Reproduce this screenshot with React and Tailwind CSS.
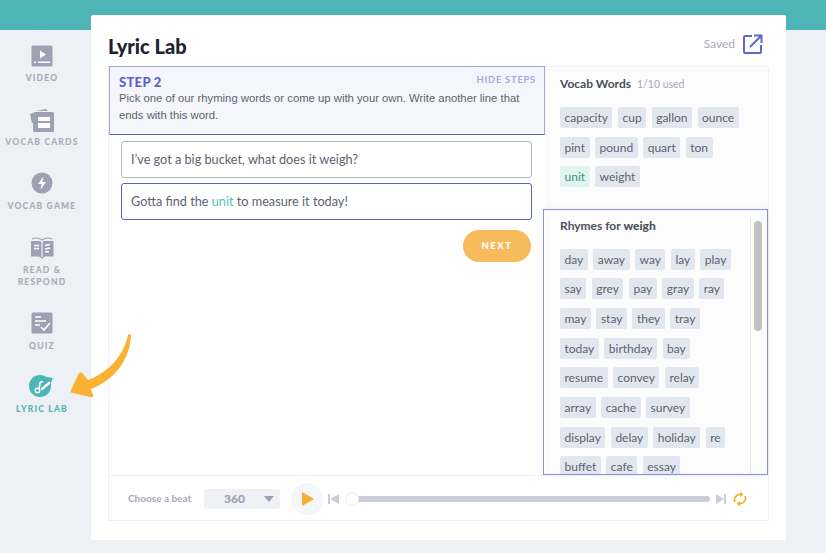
import React from 'react';

const vocabRows = [
  ['capacity', 'cup', 'gallon', 'ounce'],
  ['pint', 'pound', 'quart', 'ton'],
  ['unit', 'weight'],
];

const rhymeRows = [
  ['day', 'away', 'way', 'lay', 'play'],
  ['say', 'grey', 'pay', 'gray', 'ray'],
  ['may', 'stay', 'they', 'tray'],
  ['today', 'birthday', 'bay'],
  ['resume', 'convey', 'relay'],
  ['array', 'cache', 'survey'],
  ['display', 'delay', 'holiday', 're'],
  ['buffet', 'cafe', 'essay'],
];

const VideoIcon = () => (
  <svg width="22" height="22" viewBox="0 0 22 22">
    <rect width="21" height="21" x="0.5" y="0.5" rx="1.5" fill="#9ca1b3" />
    <path d="M9 5.5l6 4-6 4z" fill="#fff" />
    <rect x="3" y="16.5" width="2" height="1.5" fill="#fff" />
    <rect x="7" y="16.5" width="12" height="1.5" fill="#fff" />
  </svg>
);

const CardsIcon = () => (
  <svg width="26" height="24" viewBox="0 0 26 24">
    <path d="M1 5l3-1 1 10-2 0z" fill="#9ca1b3" />
    <path d="M7 2l10-2 2 2z" fill="#9ca1b3" />
    <rect x="4" y="3" width="21" height="20" rx="1.5" fill="#9ca1b3" />
    <rect x="9" y="8" width="12" height="4" fill="#fff" />
    <rect x="9" y="14" width="12" height="5" fill="#fff" />
  </svg>
);

const GameIcon = () => (
  <svg width="22" height="22" viewBox="0 0 22 22">
    <circle cx="11" cy="11" r="10.5" fill="#9ca1b3" />
    <path d="M12.5 4.5L7 12h3.5l-1 5.5L15 10h-3.5z" fill="#fff" />
  </svg>
);

const BookIcon = () => (
  <svg width="26" height="23" viewBox="0 0 26 23">
    <path d="M2 5h9l2 1.5L15 5h9.5v15.5H16l-3 2-3-2H2z" fill="#9ca1b3" />
    <path d="M3 3c3-1.5 7-1 10 1 3-2 7-2.5 10-1" fill="none" stroke="#9ca1b3" strokeWidth="1.2" />
    <path d="M5 9.5h5M5 12.5h5" stroke="#fff" strokeWidth="1.6" />
    <path d="M16 9.5l5-1M16 13l5-1M16 16l4-.5" stroke="#fff" strokeWidth="1.6" />
    <rect x="12.5" y="6" width="1" height="15" fill="#fff" />
  </svg>
);

const QuizIcon = () => (
  <svg width="22" height="22" viewBox="0 0 22 22">
    <rect width="21" height="21" x="0.5" y="0.5" rx="1.5" fill="#9ca1b3" />
    <path d="M4 5h6M4 9h11M4 13h5" stroke="#fff" strokeWidth="1.5" />
    <path d="M10 15l3 3 6-7" fill="none" stroke="#fff" strokeWidth="1.6" />
  </svg>
);

const LyricIcon = () => (
  <svg width="26" height="22" viewBox="0 0 26 22">
    <circle cx="11" cy="11" r="11" fill="#4db5b5" />
    <path d="M18 2l6 1-3 7-5-3z" fill="#4db5b5" />
    <circle cx="8.5" cy="15.5" r="2.2" fill="none" stroke="#fff" strokeWidth="1.5" />
    <path d="M10 14l1-6c.3-1.5 2-1.5 3-1" fill="none" stroke="#fff" strokeWidth="1.6" />
    <path d="M13 14l7-6" stroke="#fff" strokeWidth="2.4" strokeLinecap="round" />
  </svg>
);

const navItems = [
  { icon: <VideoIcon />, label: ['VIDEO'], iconBox: 'h-[22px] mt-[30px]', labelBox: 'mt-[5px]' },
  { icon: <CardsIcon />, label: ['VOCAB CARDS'], iconBox: 'h-[24px] mt-[25px]', labelBox: 'mt-[3px]' },
  { icon: <GameIcon />, label: ['VOCAB GAME'], iconBox: 'h-[22px] mt-[24px]', labelBox: 'mt-[6px]' },
  { icon: <BookIcon />, label: ['READ &', 'RESPOND'], iconBox: 'h-[23px] mt-[24px]', labelBox: 'mt-[5px]' },
  { icon: <QuizIcon />, label: ['QUIZ'], iconBox: 'h-[22px] mt-[24px]', labelBox: 'mt-[6px]' },
  { icon: <LyricIcon />, label: ['LYRIC LAB'], iconBox: 'h-[22px] mt-[23px]', labelBox: 'mt-[6px]', active: true },
];

const Chip = ({ word, used }) => (
  <span
    className={`h-[21px] px-[4.5px] rounded-[2px] text-[12px] leading-[21px] ${
      used ? 'bg-[#e0f4f0] text-[#3f8f7f]' : 'bg-[#e2e7ef] text-[#5c6370]'
    }`}
  >
    {word}
  </span>
);

const ChipRows = ({ rows }) => (
  <div className="flex flex-col gap-[8.7px]">
    {rows.map((row) => (
      <div key={row[0]} className="flex gap-[5.5px]">
        {row.map((word) => (
          <Chip key={word} word={word} used={word === 'unit'} />
        ))}
      </div>
    ))}
  </div>
);

const App = () => {
  return (
    <div className="relative w-[826px] h-[553px] overflow-hidden bg-[#edf1f5] font-['Lato',sans-serif]">
      <div className="h-[30px] bg-[#4db5b5]" />

      <div className="flex items-start -mt-[15px]">
        {/* menu lateral */}
        <nav className="w-[84px] mr-[7px] flex flex-col items-center">
          {navItems.map((item) => (
            <div key={item.label[0]} className="flex flex-col items-center w-full">
              <div className={`flex items-center justify-center ${item.iconBox}`}>{item.icon}</div>
              <div
                className={`text-center text-[8.5px] leading-[12px] font-black tracking-[1.2px] ${item.labelBox} ${
                  item.active ? 'text-[#4db5b5]' : 'text-[#a7abbb]'
                }`}
              >
                {item.label.map((line) => (
                  <div key={line}>{line}</div>
                ))}
              </div>
            </div>
          ))}
        </nav>

        <main className="w-[695px] h-[525px] bg-white rounded-[2px] px-[17px] pt-[16px]">
          <div className="flex items-start justify-between h-[35px]">
            <h1 className="text-[20px] leading-[30px] font-black text-[#1d2230]">Lyric Lab</h1>
            <div className="flex items-center gap-[8px] pr-[6px] mt-[3px]">
              <span className="text-[12px] text-[#a7abbb]">Saved</span>
              <svg width="20" height="20" viewBox="0 0 20 20" fill="none" stroke="#6168c9" strokeWidth="2">
                <path d="M9 2H2a1 1 0 0 0-1 1v15a1 1 0 0 0 1 1h15a1 1 0 0 0 1-1v-7" />
                <path d="M7 13L18 2M11 1.5h7.5V9" />
              </svg>
            </div>
          </div>

          <div className="w-[661px] h-[455px] border border-[#f0f1f4] flex flex-col">
            <div className="flex flex-1 min-h-0">
              <section className="w-[436px] shrink-0 -mt-px">
                <div className="h-[69px] bg-[#f5f6fb] border border-[#a0a4e0] border-b-[#5a62c8] pl-[9px] pr-[8px] pt-[7px]">
                  <div className="flex justify-between items-start">
                    <span className="text-[13px] leading-[16px] font-black text-[#5a62c8] tracking-[0.3px]">
                      STEP 2
                    </span>
                    <span className="text-[9.3px] leading-[12px] font-bold text-[#a4a8e2] tracking-[0.8px]">
                      HIDE STEPS
                    </span>
                  </div>
                  <p className="text-[11.3px] leading-[16.5px] text-[#5c6370] font-['Liberation_Sans',sans-serif]">
                    Pick one of our rhyming words or come up with your own. Write another line that ends with this word.
                  </p>
                </div>

                <div className="pl-[12px] pr-[13px] pt-[6px] flex flex-col gap-[5px]">
                  <div className="h-[37px] flex items-center px-[9px] border border-[#b4b6c0] rounded-[3px] text-[12.7px] text-[#5c6370]">
                    I’ve got a big bucket, what does it weigh?
                  </div>
                  <div className="h-[37px] flex items-center px-[9px] border-[1.5px] border-[#5a62c8] rounded-[3px] text-[12.7px] text-[#5c6370]">
                    <span>
                      Gotta find the <span className="text-[#5bbfb9]">unit</span> to measure it today!
                    </span>
                  </div>
                  <div className="flex justify-end mt-[5px] pr-[1px]">
                    <button className="w-[68px] h-[32px] rounded-full bg-[#f7bb5c] text-white text-[9.5px] font-black tracking-[1.5px]">
                      NEXT
                    </button>
                  </div>
                </div>
              </section>

              <aside className="flex-1 min-w-0 bg-[#fcfcfd] flex flex-col">
                <div className="h-[142px] pl-[15px] pt-[8px]">
                  <div className="flex items-baseline gap-[6px] mb-[16px] h-[16px]">
                    <span className="text-[12px] font-bold text-[#4a4f5c]">Vocab Words</span>
                    <span className="text-[10.5px] text-[#a7abbb]">1/10 used</span>
                  </div>
                  <ChipRows rows={vocabRows} />
                </div>

                <div className="h-[267px] -ml-[2px] border border-[#8a90d8] shadow-[0_0_8px_rgba(0,0,0,0.05)] flex overflow-hidden">
                  <div className="flex-1 pl-[16px] pt-[8px]">
                    <div className="text-[12px] leading-[16px] font-bold text-[#4a4f5c] mb-[15px]">
                      Rhymes for <span className="font-black">weigh</span>
                    </div>
                    <ChipRows rows={rhymeRows} />
                  </div>
                  <div className="w-[17px] mt-[8px] border-l border-[#e4e5e8] pl-[3px] pt-[3px]">
                    <div className="w-[8px] h-[110px] rounded-full bg-[#c2c2c2]" />
                  </div>
                </div>
              </aside>
            </div>

            <div className="h-[45px] shrink-0 border-t border-[#f0f1f4] flex items-center pl-[19px] pt-[1px]">
              <span className="w-[76px] text-[10px] font-bold text-[#a7abbb]">Choose a beat</span>
              <div className="w-[76px] h-[20px] rounded-[3px] bg-[#eff1f4] flex items-center pl-[20px] pr-[6px] justify-between">
                <span className="text-[12px] font-black text-[#9ca1b3]">360</span>
                <svg width="10" height="6" viewBox="0 0 10 6">
                  <path d="M0 0h10L5 6z" fill="#9ca1b3" />
                </svg>
              </div>
              <div className="ml-[11px] w-[32px] h-[32px] rounded-full bg-[#f5f6f8] flex items-center justify-center">
                <svg width="12" height="14" viewBox="0 0 12 14" className="ml-[1px]">
                  <path d="M0 0l12 7-12 7z" fill="#f9ae2e" />
                </svg>
              </div>
              <svg width="11" height="10" viewBox="0 0 11 10" className="ml-[5px]">
                <path d="M0 0h2v10H0zM11 0v10L2 5z" fill="#c9cdd9" />
              </svg>
              <div className="ml-[6px] w-[365px] h-[14px] flex items-center relative">
                <div className="ml-[7px] flex-1 h-[6px] rounded-r-full bg-[#c9cdd9]" />
                <div className="absolute left-0 top-0 w-[14px] h-[14px] rounded-full bg-white border border-[#e8eaef]" />
              </div>
              <svg width="10" height="10" viewBox="0 0 10 10" className="ml-[6px]">
                <path d="M0 0l8 5-8 5zM8 0h2v10H8z" fill="#c9cdd9" />
              </svg>
              <svg width="14" height="16" viewBox="0 0 14 16" fill="none" className="ml-[7px]">
                <path d="M2 11a5.5 5.5 0 0 1 6-7.5M12 5a5.5 5.5 0 0 1-6 7.5" stroke="#f9ae2e" strokeWidth="1.8" />
                <path d="M7 0.5l3.5 3L7 6zM7 10l-3.5 2.5L7 15.5z" fill="#f9ae2e" />
              </svg>
            </div>
          </div>
        </main>
      </div>

      {/* flecha sobre el menu */}
      <svg width="70" height="72" viewBox="0 0 70 72" className="absolute left-[66px] top-[332px]">
        <path
          d="M62 3C58 22 44 40 22 48L17 42C15 39 13 41 12 43L5 58C4 60 5 61 7 61L24 65C27 66 29 63 26 61L25 57C48 49 64 27 65 4C65 2 63 1 62 3Z"
          fill="#f9b233"
        />
      </svg>
    </div>
  );
};

export default App;
